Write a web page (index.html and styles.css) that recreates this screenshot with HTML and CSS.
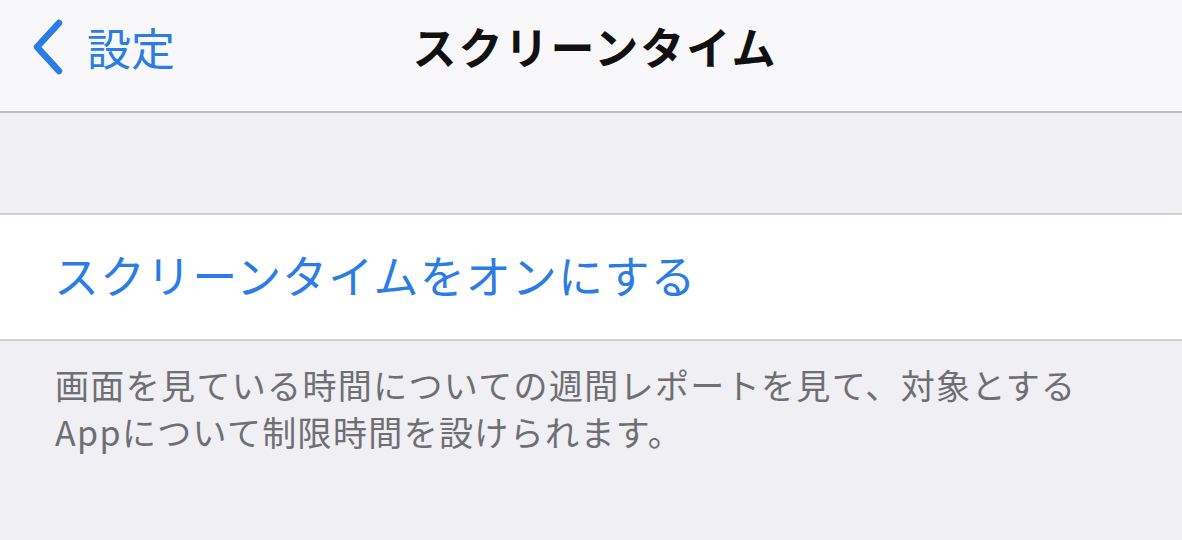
FILE: index.html
```html
<!DOCTYPE HTML>
<html lang="ja">
<head>
    <meta charset="utf-8" />
    <meta name="viewport" content="width=device-width, initial-scale=1">
    <title>スクリーンタイム</title>
    <link rel="stylesheet" href="styles.css">
</head>
<body>
    <div class="navbar">
        <a class="back" href="#">
            <svg class="chevron" width="34" height="56" viewBox="0 0 34 56">
                <polyline points="28,4 6,28 28,52" fill="none" stroke="currentColor" stroke-width="6.5" stroke-linecap="round" stroke-linejoin="round" />
            </svg>
            <span>設定</span>
        </a>
        <h1 class="title">スクリーンタイム</h1>
    </div>

    <div class="spacer"></div>

    <div class="group">
        <a class="cell" href="#">スクリーンタイムをオンにする</a>
    </div>

    <p class="footnote">画面を見ている時間についての週間レポートを見て、対象とする<br>Appについて制限時間を設けられます。</p>
</body>
</html>
```

FILE: styles.css
```css
html, body {
    margin: 0;
    height: 100%;
}

body {
    background: #efeff4;
    font-family: "Noto Sans CJK JP", "Noto Sans", sans-serif;
    overflow: hidden;
}

a {
    text-decoration: none;
    color: #2c7de3;
}

.navbar {
    position: relative;
    height: 111px;
    background: #f8f8fa;
    border-bottom: 2px solid #bcbcc0;
    display: flex;
    align-items: center;
    justify-content: center;
}

.back {
    position: absolute;
    left: 31px;
    top: 19px;
    display: flex;
    align-items: center;
    font-size: 44px;
}

.back span {
    margin-left: 22px;
    line-height: 56px;
}

.title {
    margin: 0 0 20px 8px;
    font-size: 44px;
    font-weight: bold;
    color: #111;
    letter-spacing: 2px;
}

.spacer {
    height: 100px;
}

.group {
    background: #fff;
    border-top: 2px solid #d0d0d4;
    border-bottom: 2px solid #d0d0d4;
}

.cell {
    display: flex;
    align-items: center;
    height: 118px;
    padding: 0 0 6px 54px;
    font-size: 45px;
    letter-spacing: 1.1px;
}

.footnote {
    margin: 0;
    padding: 20px 0 0 55px;
    font-size: 34px;
    line-height: 47px;
    color: #6e6e73;
    letter-spacing: 1.35px;
}
```
